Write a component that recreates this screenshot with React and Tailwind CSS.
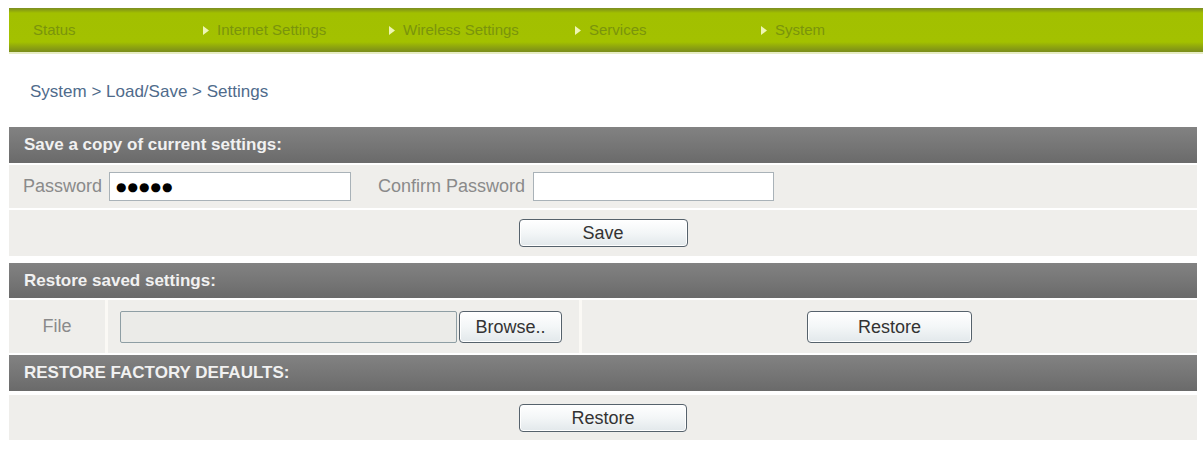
const menu = ['Internet Settings', 'Wireless Settings', 'Services', 'System'];

function Arrow() {
  return (
    <svg width="6" height="9" viewBox="0 0 6 9" className="mr-[8px] shrink-0">
      <path d="M0 0 L6 4.5 L0 9 Z" fill="#eef5b4" />
    </svg>
  );
}

function Button({ children, className = '' }) {
  return (
    <button
      type="button"
      className={`h-[28px] rounded-[4px] border border-[#56626c] bg-[linear-gradient(to_bottom,#ffffff,#f3f6f7_50%,#e2e8eb)] text-[18px] leading-none text-[#333] shadow-[inset_0_0_0_1px_#ffffff] ${className}`}
    >
      {children}
    </button>
  );
}

function Header({ children, className = '' }) {
  return (
    <div
      className={`flex items-center pl-[15px] bg-[linear-gradient(to_bottom,#828282,#747474_60%,#6a6a6a)] text-[17px] font-bold text-[#f1f1f1] ${className}`}
    >
      {children}
    </div>
  );
}

export default function App() {
  return (
    <div className="w-[1203px] h-[459px] overflow-hidden bg-white font-['Liberation_Sans',Arial,sans-serif]">
      {/* top menu bar */}
      <div className="mt-[8px] ml-[9px] h-[44px] flex items-center pl-[24px] bg-[linear-gradient(to_bottom,#7c8e24_0px,#8aa012_2px,#a2c000_5px,#a3c100_34px,#92aa0c_38px,#7a8c1c_44px)] text-[15px] text-[#7a940c]">
        <span className="w-[170px]">Status</span>
        {menu.map(item => (
          <span key={item} className="w-[186px] flex items-center">
            <Arrow />
            {item}
          </span>
        ))}
      </div>
      <div className="ml-[9px] h-[2px] bg-[#e7edc4]" />

      <div className="mt-[28px] ml-[30px] text-[17px] leading-[20px] text-[#4f6b8b]">
        System &gt; Load/Save &gt; Settings
      </div>

      <div className="mt-[25px] ml-[9px] w-[1188px] flex flex-col">
        <Header className="h-[36px]">Save a copy of current settings:</Header>

        <div className="mt-[2px] h-[43px] flex items-center bg-[#efeeeb] text-[18px] text-[#8a8a8a]">
          <span className="ml-[14px]">Password</span>
          {/* masked value shown as bullets */}
          <input
            type="text"
            readOnly
            value="●●●●●"
            className="ml-[7px] w-[242px] h-[29px] border border-[#a9b2b8] bg-white px-[6px] font-['DejaVu_Sans',sans-serif] text-[12px] tracking-[1px] text-black outline-none"
          />
          <span className="ml-[27px]">Confirm Password</span>
          <input
            type="password"
            readOnly
            value=""
            className="ml-[8px] w-[241px] h-[29px] border border-[#a9b2b8] bg-white outline-none"
          />
        </div>

        <div className="mt-[2px] h-[46px] flex items-center justify-center bg-[#efeeeb]">
          <Button className="w-[169px]">Save</Button>
        </div>

        <Header className="mt-[7px] h-[35px]">Restore saved settings:</Header>

        <div className="mt-[2px] h-[53px] flex gap-[3px] bg-[#fbf9f5]">
          <div className="w-[96px] flex items-center justify-center bg-[#efeeeb] text-[18px] text-[#8a8a8a]">
            File
          </div>
          <div className="w-[471px] flex items-center bg-[#efeeeb] pl-[12px]">
            <div className="w-[337px] h-[32px] rounded-[2px] border border-[#8e9ea4] bg-[#ebebe8]" />
            <Button className="ml-[2px] w-[103px] h-[32px]">Browse..</Button>
          </div>
          <div className="flex-1 flex items-center justify-center bg-[#efeeeb]">
            <Button className="w-[165px] h-[32px]">Restore</Button>
          </div>
        </div>

        <Header className="mt-[2px] h-[36px]">RESTORE FACTORY DEFAULTS:</Header>

        <div className="mt-[4px] h-[45px] flex items-center justify-center bg-[#efeeeb]">
          <Button className="w-[168px]">Restore</Button>
        </div>
      </div>
    </div>
  );
}
